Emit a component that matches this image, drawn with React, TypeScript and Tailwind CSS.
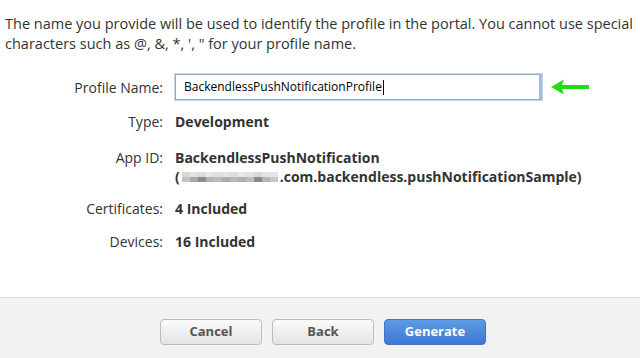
import React from "react";

const pixTop = ["#d8d8d8", "#e2e2e2", "#dcdcdc", "#e6e6e6", "#e0e0e0", "#e4e4e4", "#dedede", "#e8e8e8", "#e2e2e2", "#dadada", "#e4e4e4", "#e6e6e6"];
const pixBottom = ["#c4c4c4", "#a8a8a8", "#8c8c8c", "#b4b4b4", "#bcbcbc", "#acacac", "#b8b8b8", "#b0b0b0", "#bcbcbc", "#888888", "#b4b4b4", "#c8c8c8"];

function Row({ label, children, className = "" }: { label: string; children: React.ReactNode; className?: string }) {
  return (
    <div className={`flex items-start leading-[19px] ${className}`}>
      <div className="w-[164px] shrink-0 pr-[1px] text-right">{label}</div>
      <div className="pl-[11px] font-bold">{children}</div>
    </div>
  );
}

export default function App() {
  return (
    <div
      className="w-[640px] h-[358px] bg-white flex flex-col text-[14px] text-[#333]"
      style={{ fontFamily: "'Open Sans', 'Liberation Sans', sans-serif" }}
    >
      <div className="flex-1">
        <p className="px-[5px] pt-[14px] leading-[20px] text-[14.5px]">
          The name you provide will be used to identify the profile in the portal. You cannot use special characters such as @, &amp;, *, ', " for your profile name.
        </p>

        <div className="mt-[20px] flex items-center">
          <div className="w-[164px] shrink-0 pr-[1px] text-right">Profile Name:</div>
          <div className="ml-[11px] w-[367px] h-[26px] border border-[#9aa8bf] border-r-[3px] border-r-[#a7bde0] shadow-[0_0_0_1px_#c7d6ee] bg-white flex items-center px-[8px] text-[12px] text-black">
            BackendlessPushNotificationProfile
            <span className="w-px h-[15px] bg-black ml-px" />
          </div>
          <svg className="ml-[9px]" width="40" height="16" viewBox="0 0 40 16">
            <path d="M0 8 L13 0.5 L11 6 L38 6 L38 10 L11 10 L13 15.5 Z" fill="#22dd11" />
          </svg>
        </div>

        <Row label="Type:" className="mt-[12px]">Development</Row>

        <Row label="App ID:" className="mt-[17px]">
          <div className="h-[19px]">BackendlessPushNotification</div>
          <div className="h-[19px] flex items-center">
            (
            <span className="inline-flex flex-col mx-[2px]">
              <span className="flex">
                {pixTop.map((c, i) => (
                  <span key={i} className="w-[8px] h-[5px]" style={{ backgroundColor: c }} />
                ))}
              </span>
              <span className="flex">
                {pixBottom.map((c, i) => (
                  <span key={i} className="w-[8px] h-[5px]" style={{ backgroundColor: c }} />
                ))}
              </span>
            </span>
            .com.backendless.pushNotificationSample)
          </div>
        </Row>

        <Row label="Certificates:" className="mt-[13px]">4 Included</Row>
        <Row label="Devices:" className="mt-[14px]">16 Included</Row>
      </div>

      <div className="h-[61px] border-t border-[#dcdcdc] bg-[#f2f2f2] flex justify-center items-start pt-[21px] gap-[10px] pl-[6px] text-[13px] font-bold">
        <button className="w-[102px] h-[26px] rounded-[4px] border border-[#bdbdbd] bg-gradient-to-b from-[#fbfbfb] to-[#e4e4e4] text-[#555]">Cancel</button>
        <button className="w-[102px] h-[26px] rounded-[4px] border border-[#bdbdbd] bg-gradient-to-b from-[#fbfbfb] to-[#e4e4e4] text-[#555]">Back</button>
        <button className="w-[102px] h-[26px] rounded-[4px] border border-[#3f75c4] bg-gradient-to-b from-[#5e9be6] to-[#3b78d0] text-white">Generate</button>
      </div>
    </div>
  );
}
